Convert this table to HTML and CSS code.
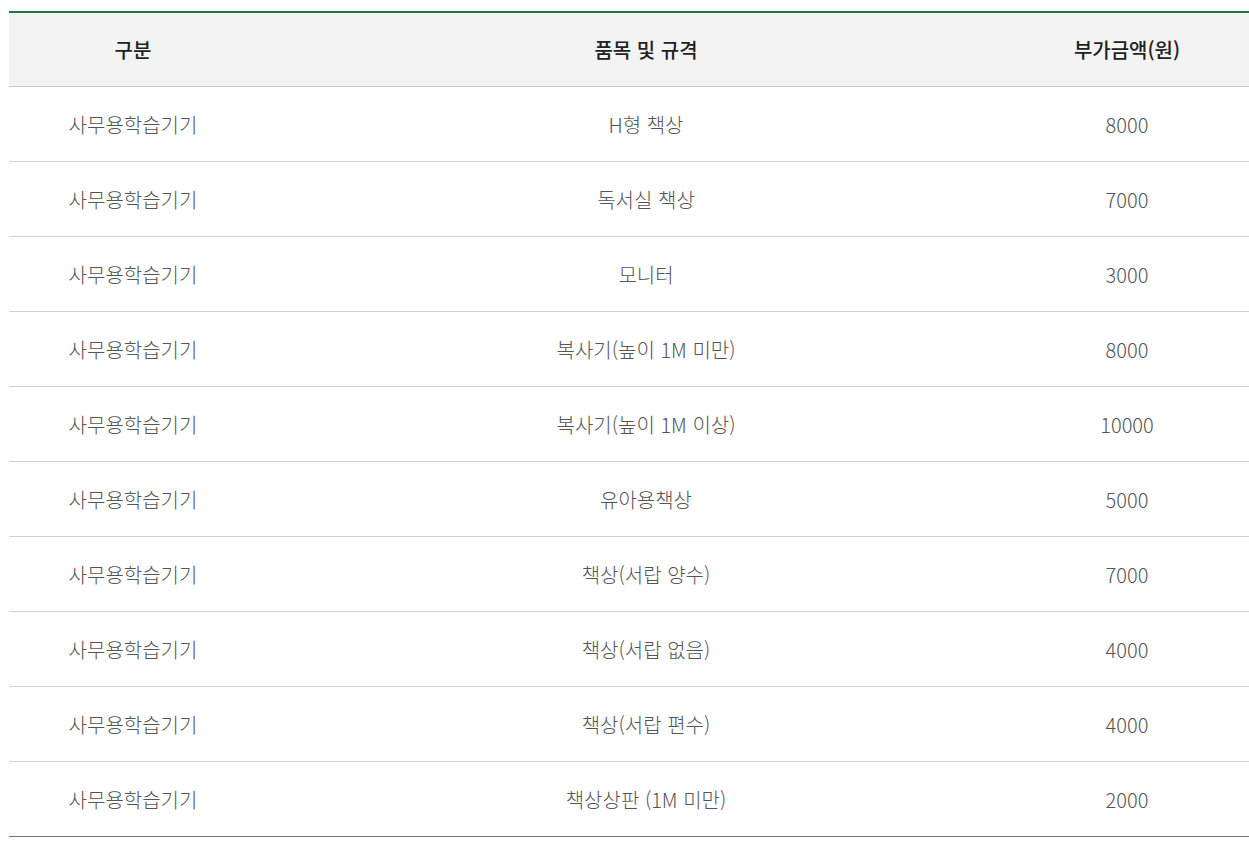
FILE: index.html
```html
<!DOCTYPE html>
<html lang="ko">
<head>
<meta charset="utf-8">
<link rel="stylesheet" href="styles.css">
</head>
<body>
<div class="wrap">
<table class="price">
<colgroup><col class="c1"><col class="c2"><col class="c3"></colgroup>
<thead>
<tr><th>구분</th><th>품목 및 규격</th><th class="amt">부가금액(원)</th></tr>
</thead>
<tbody>
<tr><td>사무용학습기기</td><td>H형 책상</td><td class="amt">8000</td></tr>
<tr><td>사무용학습기기</td><td>독서실 책상</td><td class="amt">7000</td></tr>
<tr><td>사무용학습기기</td><td>모니터</td><td class="amt">3000</td></tr>
<tr><td>사무용학습기기</td><td>복사기(높이 1M 미만)</td><td class="amt">8000</td></tr>
<tr><td>사무용학습기기</td><td>복사기(높이 1M 이상)</td><td class="amt">10000</td></tr>
<tr><td>사무용학습기기</td><td>유아용책상</td><td class="amt">5000</td></tr>
<tr><td>사무용학습기기</td><td>책상(서랍 양수)</td><td class="amt">7000</td></tr>
<tr><td>사무용학습기기</td><td>책상(서랍 없음)</td><td class="amt">4000</td></tr>
<tr><td>사무용학습기기</td><td>책상(서랍 편수)</td><td class="amt">4000</td></tr>
<tr><td>사무용학습기기</td><td>책상상판 (1M 미만)</td><td class="amt">2000</td></tr>
</tbody>
</table>
</div>
</body>
</html>
```
FILE: styles.css
```css
html, body { margin: 0; padding: 0; background: #fff; }
body { font-family: "Noto Sans CJK KR", "Noto Sans", sans-serif; }
.wrap { padding: 11px 0 0 9px; }
.price {
  width: 1240px;
  border-collapse: collapse;
  table-layout: fixed;
  border-top: 2px solid #167a45;
  border-bottom: 1px solid #777;
}
.c1 { width: 248px; }
.c2 { width: 778px; }
.c3 { width: 214px; }
.price th, .price td {
  text-align: center;
  font-size: 20px;
  line-height: 28px;
  padding: 0;
}
.price th {
  height: 73px;
  background: #f3f3f3;
  color: #222;
  font-weight: 500;
  border-bottom: 1px solid #c9c9c9;
}
.price td {
  height: 72px;
  padding-top: 2px;
  color: #555;
  font-weight: 300;
  border-bottom: 1px solid #d0d0d0;
}
.price tbody tr:last-child td { border-bottom: 1px solid #777; }
.price .amt { padding-right: 30px; }
```
